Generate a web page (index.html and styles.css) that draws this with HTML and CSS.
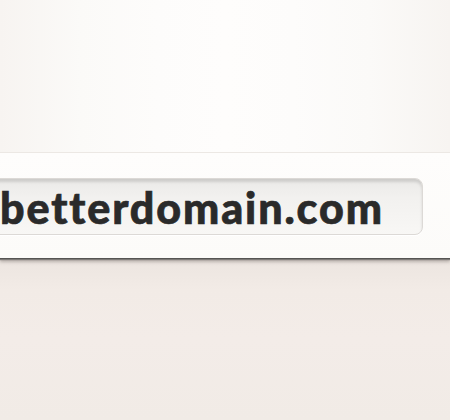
FILE: index.html
```html
<!DOCTYPE html>
<html>
<head>
<meta charset="utf-8">
<link rel="stylesheet" href="styles.css">
</head>
<body>
<div class="page">
  <div class="top"></div>
  <div class="bar">
    <div class="field"><span class="url">betterdomain.com</span></div>
  </div>
  <div class="bottom"></div>
</div>
</body>
</html>
```
FILE: styles.css
```css
html, body {
  margin: 0;
  padding: 0;
  width: 450px;
  height: 420px;
  overflow: hidden;
}
.page {
  display: flex;
  flex-direction: column;
  height: 420px;
  background: #f7f3f0;
}
.top {
  height: 152px;
  background:
    linear-gradient(90deg, #f7f4f1 0%, #fbfaf8 18%, #fdfcfb 35%, #fefdfc 50%, #fdfcfb 65%, #fbfaf8 82%, #f7f4f1 100%);
  border-bottom: 1px solid #ece8e4;
}
.bar {
  height: 105px;
  background: linear-gradient(180deg, #fefdfc 0%, #fcfbf9 100%);
  display: flex;
  align-items: flex-start;
  padding-top: 25px;
  box-sizing: border-box;
  box-shadow: 0 1px 0 #555452, 0 2px 1px #7d7a77, 0 4px 3px rgba(120,112,106,0.45);
  position: relative;
  z-index: 1;
}
.field {
  margin-left: -20px;
  width: 443px;
  height: 57px;
  box-sizing: border-box;
  border-radius: 8px;
  border: 1px solid #dcd9d6;
  background: linear-gradient(180deg, #ebeae8 0%, #f2f1ef 35%, #f8f7f5 100%);
  box-shadow: inset 0 3px 3px rgba(0,0,0,0.13), 0 1px 0 #ffffff;
  display: flex;
  align-items: center;
  padding-left: 19px;
}
.url {
  font-family: "Lato", "Open Sans", sans-serif;
  font-weight: 900;
  font-size: 43px;
  color: #2a2a2a;
  letter-spacing: 1.9px;
  line-height: 1;
  -webkit-text-stroke: 0.7px #2a2a2a;
  position: relative;
  top: 1px;
}
.bottom {
  flex: 1;
  background:
    linear-gradient(180deg, #ece5e0 0%, #f2ebe6 20%, #f3ece8 50%, #f1ebe6 100%);
}
```
